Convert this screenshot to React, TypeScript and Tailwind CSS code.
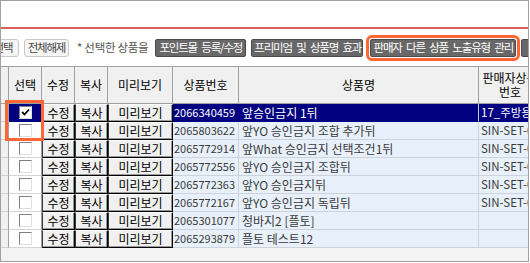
import React from "react";

type Row = {
  id: string;
  name: string;
  sellerCode: string;
  selected?: boolean;
};

const rows: Row[] = [
  { id: "2066340459", name: "앞승인금지 1뒤", sellerCode: "17_주방용품", selected: true },
  { id: "2065803622", name: "앞YO 승인금지 조합 추가뒤", sellerCode: "SIN-SET-0001" },
  { id: "2065772914", name: "앞What 승인금지 선택조건1뒤", sellerCode: "SIN-SET-0002" },
  { id: "2065772556", name: "앞YO 승인금지 조합뒤", sellerCode: "SIN-SET-0003" },
  { id: "2065772363", name: "앞YO 승인금지뒤", sellerCode: "SIN-SET-0004" },
  { id: "2065772167", name: "앞YO 승인금지 독립뒤", sellerCode: "SIN-SET-0005" },
  { id: "2065301077", name: "청바지2 [플토]", sellerCode: "" },
  { id: "2065293879", name: "플토 테스트12", sellerCode: "" },
];

function LightButton({ label, className = "" }: { label: string; className?: string }) {
  return (
    <button
      className={`h-[18px] shrink-0 whitespace-nowrap rounded-[3px] border border-[#c8c8c8] bg-[#f6f6f6] px-[2px] text-[11.5px] leading-none tracking-[-1.2px] text-[#444] ${className}`}
    >
      {label}
    </button>
  );
}

function DarkButton({ label, className = "" }: { label: string; className?: string }) {
  return (
    <button
      className={`h-[18px] shrink-0 whitespace-nowrap rounded-[2px] border border-[#4a4a4a] bg-[#686868] px-[2px] text-[11.5px] leading-none tracking-[-1.2px] text-white [word-spacing:3px] ${className}`}
    >
      {label}
    </button>
  );
}

function CheckBox({ checked }: { checked?: boolean }) {
  return (
    <span className="flex h-[13px] w-[13px] items-center justify-center border border-t-[#808080] border-l-[#808080] border-r-[#e0e0e0] border-b-[#e0e0e0] bg-white">
      {checked && (
        <svg width="9" height="9" viewBox="0 0 9 9">
          <path d="M1 4 L3.5 6.5 L8 1.5" fill="none" stroke="#000" strokeWidth="1.8" />
        </svg>
      )}
    </span>
  );
}

function RowButton({ label, width }: { label: string; width: string }) {
  return (
    <div className={`${width} h-full shrink-0`}>
      <button className="flex h-full w-full items-center justify-center border border-t-white border-l-[#3a3a3a] border-r-black border-b-black bg-[#f0f0f0] text-[12px] leading-none text-black shadow-[inset_-1px_-1px_0_#9a9a9a]">
        {label}
      </button>
    </div>
  );
}

export default function App() {
  return (
    <div className="relative flex h-[262px] w-[529px] flex-col overflow-hidden border border-[#a0a0a0] bg-white font-['Noto_Sans_CJK_KR',sans-serif]">
      {/* title strip */}
      <div className="h-[26px] shrink-0" />
      <div className="h-[2px] shrink-0 bg-[#d9605c]" />

      {/* action bar */}
      <div className="flex h-[37px] shrink-0 items-center gap-[5px] whitespace-nowrap">
        <LightButton label="선택" className="ml-[-14px] w-[32px]" />
        <LightButton label="전체해제" className="w-[45px]" />
        <span className="ml-[3px] mr-[2px] text-[11.5px] tracking-[-0.3px] text-[#555]">* 선택한 상품을</span>
        <DarkButton label="포인트몰 등록/수정" className="w-[91px]" />
        <DarkButton label="프리미엄 및 상품명 효과" className="w-[112px]" />
        <DarkButton
          label="판매자 다른 상품 노출유형 관리"
          className="ml-[2px] w-[146px] outline-[3px] outline-offset-[1px] outline-[#ff6633]"
        />
        <DarkButton label="상품 일괄 수정" className="w-[80px]" />
      </div>

      {/* grid */}
      <div className="flex min-h-0 flex-1 flex-col border-t border-[#a0a0a0] bg-[#f3f3f3]">
        <div className="flex h-[37px] shrink-0 border-b border-[#a0a0a0] bg-[#f0f0f0] text-[12px] leading-[14px] text-black">
          <div className="w-[8px] shrink-0 border-r border-[#a0a0a0]" />
          <div className="flex w-[33px] shrink-0 items-center justify-center border-r border-[#a0a0a0]">선택</div>
          <div className="flex w-[33px] shrink-0 items-center justify-center border-r border-[#a0a0a0]">수정</div>
          <div className="flex w-[33px] shrink-0 items-center justify-center border-r border-[#a0a0a0]">복사</div>
          <div className="flex w-[65px] shrink-0 items-center justify-center border-r border-[#a0a0a0]">미리보기</div>
          <div className="flex w-[66px] shrink-0 items-center justify-center border-r border-[#a0a0a0]">상품번호</div>
          <div className="flex w-[240px] shrink-0 items-center justify-center border-r border-[#a0a0a0]">상품명</div>
          <div className="flex w-[62px] shrink-0 flex-col items-center justify-center overflow-hidden text-center leading-[14px]">
            <span className="block h-[14px] whitespace-nowrap">판매자상품</span>
            <span className="block h-[14px]">번호</span>
          </div>
        </div>

        {rows.map((r) => (
          <div key={r.id} className="flex h-[18px] shrink-0 text-[12px] leading-none">
            <div className="w-[8px] shrink-0 border-r border-b border-[#a0a0a0] border-b-[#d0d0d0] bg-[#f0f0f0]" />
            <div
              className={`flex w-[33px] shrink-0 items-center justify-center border-r border-b border-r-[#a0a0a0] ${
                r.selected ? "border-b-[#000080] bg-[#000080]" : "border-b-[#d4d4d4] bg-white"
              }`}
            >
              <CheckBox checked={r.selected} />
            </div>
            <RowButton label="수정" width="w-[33px]" />
            <RowButton label="복사" width="w-[33px]" />
            <RowButton label="미리보기" width="w-[65px]" />
            <div
              className={`flex w-[66px] shrink-0 items-center overflow-hidden border-r border-b pl-[1px] text-[11px] ${
                r.selected
                  ? "border-[#000080] bg-[#000080] text-white"
                  : "border-[#cdd3d9] bg-[#e8f1fb] text-[#3a3a3a]"
              }`}
            >
              {r.id}
            </div>
            <div
              className={`flex w-[240px] shrink-0 items-center overflow-hidden whitespace-nowrap border-r border-b pl-[3px] ${
                r.selected
                  ? "border-r-[#c8ccd0] border-b-[#000080] bg-[#000080] text-white"
                  : "border-[#cdd3d9] bg-[#e8f1fb] text-[#3a3a3a]"
              }`}
            >
              {r.name}
            </div>
            <div
              className={`flex w-[62px] shrink-0 items-center overflow-hidden whitespace-nowrap border-b pl-[2px] text-[11.5px] ${
                r.selected
                  ? "border-[#000080] bg-[#000080] text-white"
                  : "border-[#cdd3d9] bg-[#e8f1fb] text-[#3a3a3a]"
              }`}
            >
              {r.sellerCode}
            </div>
          </div>
        ))}
      </div>

      {/* annotation around the checked row */}
      <div className="pointer-events-none absolute left-[4px] top-[99px] h-[41px] w-[39px] border-[3px] border-[#ff6633]" />
    </div>
  );
}
